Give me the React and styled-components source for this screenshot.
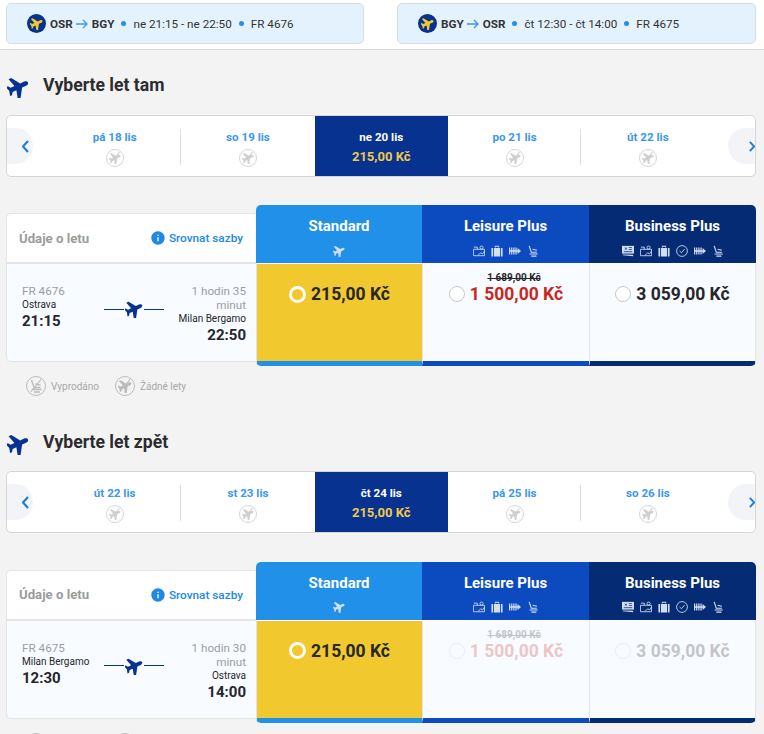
import React from 'react'
import styled, { createGlobalStyle } from 'styled-components'
import { MdInfo } from 'react-icons/md'

const GlobalStyle = createGlobalStyle`
  html, body {
    margin: 0;
    padding: 0;
    background: #f3f3f3;
    font-family: Roboto, "Liberation Sans", sans-serif;
    color: #26262b;
  }
  html { height: 734px; overflow: hidden; }
`

const navy = '#08328f'
const blue = '#2090e9'
const fareColors = { standard: '#2090e9', leisure: '#0c4abf', business: '#052b74' }

const TopBar = styled.header`
  height: 46px;
  background: #fff;
  border-bottom: 1px solid #d9d9d9;
  display: grid;
  grid-template-columns: 358px 359px;
  grid-template-rows: 41px;
  justify-content: space-between;
  padding: 3px 8px 0 6px;
  box-sizing: content-box;
`

const Summary = styled.div`
  box-sizing: border-box;
  background: #e4f2fd;
  border: 1px solid #d3dde6;
  border-radius: 5px;
  display: flex;
  align-items: center;
  padding-left: 20px;
  font-size: 11.7px;
  color: #333;
`

const Badge = styled.span`
  width: 19px;
  height: 19px;
  border-radius: 50%;
  background: ${navy};
  color: #f1c92f;
  display: flex;
  align-items: center;
  justify-content: center;
  margin-right: 4px;
`

const Route = styled.b`
  font-weight: 700;
  color: #333;
`

const RouteArrow = styled.svg`
  width: 12px;
  height: 10px;
  margin: 0 4px 0 3px;
`

const Dot = styled.i`
  width: 5px;
  height: 5px;
  border-radius: 50%;
  background: ${blue};
  margin: 0 7px;
`

const Section = styled.section`
  padding: 0 8px 0 6px;
`

const Title = styled.h2`
  margin: 0;
  height: 65px;
  box-sizing: border-box;
  padding-top: ${p => p.$top}px;
  display: flex;
  align-items: center;
  font-size: 17.6px;
  font-weight: 700;
  color: #2c2c30;
  svg { color: ${navy}; margin: 3px 14px 0 1px; }
`

const Strip = styled.div`
  height: 62px;
  box-sizing: border-box;
  background: #fff;
  border: 1px solid #d6d6d6;
  border-radius: 5px;
  display: grid;
  grid-template-columns: 41px repeat(5, 133.3px) 1fr;
  align-items: stretch;
  overflow: hidden;
`

const ArrowCell = styled.div`
  display: flex;
  align-items: center;
  justify-content: ${p => (p.$right ? 'flex-end' : 'flex-start')};
`

const ArrowButton = styled.span`
  width: ${p => (p.$right ? 27 : 26)}px;
  height: 36px;
  box-sizing: border-box;
  background: #f2f4f7;
  color: #1f7fd6;
  display: flex;
  align-items: center;
  justify-content: ${p => (p.$right ? 'flex-start' : 'flex-end')};
  padding: ${p => (p.$right ? '0 0 0 21px' : '0 4px 0 0')};
  border-radius: ${p => (p.$right ? '18px 0 0 18px' : '0 18px 18px 0')};
`

const Day = styled.div`
  position: relative;
  display: flex;
  flex-direction: column;
  align-items: center;
  padding-top: 14px;
  font-size: 11.6px;
  font-weight: 700;
  color: ${p => (p.$active ? '#fff' : '#3b97ef')};
  background: ${p => (p.$active ? navy : 'transparent')};
  &::after {
    content: '';
    display: ${p => (p.$divider ? 'block' : 'none')};
    position: absolute;
    right: 0;
    top: 13px;
    height: 36px;
    border-right: 1px solid #e0e0e0;
  }
`

const DayPrice = styled.div`
  color: #f1c94a;
  font-size: 13px;
  margin-top: 5px;
`

const NoFlight = styled.span`
  width: 18px;
  height: 18px;
  margin-top: 5px;
  box-sizing: border-box;
  border: 1.5px solid #d6d6d6;
  border-radius: 50%;
  color: #d0d0d0;
  display: flex;
  align-items: center;
  justify-content: center;
  position: relative;
  &::after {
    content: '';
    position: absolute;
    left: 1px;
    right: 1px;
    top: 7px;
    border-top: 1px solid #cfcfcf;
    transform: rotate(-50deg);
  }
`

const Fares = styled.div`
  margin-top: ${p => p.$gap}px;
  display: grid;
  grid-template-columns: 250px 166px 167px 167px;
  grid-template-rows: 58px 103px;
`

const InfoHead = styled.div`
  margin-top: 8px;
  background: #fff;
  border: 1px solid #e4e4e4;
  border-right: 0;
  border-radius: 5px 0 0 0;
  display: flex;
  align-items: center;
  justify-content: space-between;
  padding: 0 13px 0 12px;
  font-size: 13.2px;
  font-weight: 700;
  color: #9b9b9b;
`

const Compare = styled.span`
  display: flex;
  align-items: center;
  gap: 3px;
  font-size: 11.8px;
  color: #2088e5;
  font-weight: 500;
`

const FareHead = styled.div`
  background: ${p => fareColors[p.$fare]};
  border-radius: ${p => p.$radius || 0};
  color: #fff;
  display: flex;
  flex-direction: column;
  align-items: center;
  padding-top: 12px;
  font-size: 15px;
  line-height: 18px;
  font-weight: 700;
`

const Perks = styled.div`
  display: flex;
  align-items: center;
  gap: 6px;
  height: 13px;
  margin-top: 9px;
  color: #d2def4;
  > svg { width: 12px; height: 12px; flex: none; }
`

const FlightCell = styled.div`
  margin-bottom: 4px;
  background: #f8fbff;
  border: 1px solid #e4e4e4;
  border-right: 0;
  border-radius: 0 0 0 5px;
  padding: 20px 10px 0 15px;
  display: grid;
  grid-template-columns: 1fr 60px 1fr;
  box-sizing: border-box;
`

const Side = styled.div`
  display: flex;
  flex-direction: column;
  align-items: ${p => (p.$end ? 'flex-end' : 'flex-start')};
  text-align: ${p => (p.$end ? 'right' : 'left')};
  white-space: ${p => (p.$end ? 'normal' : 'nowrap')};
`

const Muted = styled.div`
  font-size: 11.7px;
  line-height: 14px;
  color: #9c9ca5;
`

const Place = styled.div`
  font-size: 10px;
  line-height: 13px;
  color: #26262b;
`

const Time = styled.div`
  font-size: 15px;
  line-height: 17px;
  font-weight: 700;
  margin-top: 2px;
  color: #26262b;
`

const Leg = styled.div`
  display: flex;
  align-items: center;
  justify-content: center;
  gap: 1px;
  color: ${navy};
  height: 20px;
  margin-top: 15px;
  svg { flex: none; }
  &::before, &::after {
    content: '';
    width: 20px;
    border-top: 1px solid ${navy};
    flex: none;
  }
`

const FareCell = styled.div`
  background: ${p => (p.$selected ? '#f1c92f' : '#f8fbff')};
  border-left: 1px solid #e0e4ea;
  border-right: ${p => (p.$last ? '1px solid #e0e4ea' : 0)};
  border-bottom: 5px solid ${p => fareColors[p.$fare]};
  border-top: 1px solid #fff;
  border-radius: ${p => p.$radius || 0};
  box-sizing: border-box;
  display: flex;
  flex-direction: column;
  align-items: center;
`

const Faded = styled.div`
  opacity: ${p => (p.$dim ? 0.25 : 1)};
  display: flex;
  flex-direction: column;
  align-items: center;
  padding-top: ${p => (p.$hasOld ? 8 : 20)}px;
`

const OldPrice = styled.s`
  font-size: 10px;
  font-weight: 700;
  line-height: 12px;
  color: #26262b;
  margin-left: 16px;
`

const PriceRow = styled.div`
  display: flex;
  align-items: center;
  gap: 5px;
`

const Radio = styled.span`
  width: ${p => (p.$selected ? 11 : 14)}px;
  height: ${p => (p.$selected ? 11 : 14)}px;
  box-sizing: content-box;
  border-radius: 50%;
  background: ${p => (p.$selected ? '#f1c92f' : '#fff')};
  border: ${p => (p.$selected ? '3px solid #fff' : '1px solid #c8c8c8')};
`

const Price = styled.span`
  font-size: 17.5px;
  line-height: 20px;
  font-weight: 700;
  white-space: nowrap;
  color: ${p => (p.$sale ? '#c9281f' : '#26262b')};
`

const Legend = styled.div`
  display: flex;
  align-items: flex-start;
  gap: 16px;
  padding: 10px 0 0 20px;
  height: 40px;
  box-sizing: border-box;
  font-size: 10px;
  color: #a8a8a8;
`

const LegendItem = styled.span`
  display: flex;
  align-items: center;
  gap: 5px;
`

const LegendIcon = styled.span`
  width: 20px;
  height: 20px;
  box-sizing: border-box;
  border: 1.5px solid #bcbcbc;
  border-radius: 50%;
  color: #bcbcbc;
  display: flex;
  align-items: center;
  justify-content: center;
  position: relative;
  &::after {
    content: '';
    position: absolute;
    left: 1px;
    right: 1px;
    top: 8px;
    border-top: 1px solid #bcbcbc;
    transform: rotate(-50deg);
  }
`

const Plane = ({ size = 12 }) => (
  <svg width={size} height={size} viewBox="0 0 24 24" fill="currentColor">
    <g transform="rotate(65 12 12)">
      <path d="M12 0c1.500 0 2.500 1.600 2.500 3.400v4.800L24 14.500v3.300l-9.500-2.700v4.500l2.800 2.100V24L12 22.500 6.700 24v-2.300l2.800-2.100v-4.500L0 17.800v-3.300l9.500-6.300V3.400C9.500 1.600 10.500 0 12 0z" />
    </g>
  </svg>
)

const Chevron = ({ right }) => (
  <svg width="7" height="13" viewBox="0 0 7 13" fill="none" stroke="currentColor" strokeWidth="2.2">
    <path d={right ? 'M1 1l5 5.500-5 5.500' : 'M6 1L1 6.500l5 5.500'} />
  </svg>
)

const Seat = ({ size = 12 }) => (
  <svg width={size} height={size} viewBox="0 0 14 14" fill="none" stroke="currentColor" strokeWidth="1.300">
    <path d="M2.500 1l2.500 7.500h6.500M3 10.500h9.500M5 13h6" />
    <path d="M6.500 5l5 1.200" />
  </svg>
)

const Ticket = () => (
  <svg viewBox="0 0 14 14" fill="currentColor">
    <path d="M0 1h14v9H0z" />
    <path d="M1 11l12 .5V13L1 12z" />
    <path d="M3.500 3l2 2.500M5.500 3l-2 2.500M8 3h3.500M8 5.300h3.500M2 7.800h10" stroke="#052b74" strokeWidth=".9" />
  </svg>
)

const MapBag = () => (
  <svg viewBox="0 0 14 14" fill="none" stroke="currentColor" strokeWidth="1">
    <path d="M.5 5h13v7.500H.5zM1 2.500h4V5M6 12l3-3 2 1.500 2.500-3.500" />
    <circle cx="10" cy="3" r="1.800" />
  </svg>
)

const Bag = () => (
  <svg viewBox="0 0 14 14" fill="currentColor">
    <path d="M4.500 3V1h5v2H8.500V2h-3v1z" />
    <path d="M.5 3.500h2v10h-2zM3.500 3.500h7v10h-7zM11.500 3.500h2v10h-2z" />
  </svg>
)

const Clock = () => (
  <svg viewBox="0 0 14 14" fill="none" stroke="currentColor" strokeWidth="1">
    <circle cx="7" cy="7" r="6.300" />
    <path d="M4.200 7l2.200 2 3.600-4.200" />
  </svg>
)

const Seats = () => (
  <svg viewBox="0 0 14 14" fill="currentColor">
    <path d="M0 3h1.400v8H0zM2.500 3h1.400v8H2.500zM5 3h1.400v8H5zM7.500 3h1.400v8H7.500z" />
    <path d="M0 6h10V3.500L14 7l-4 3.500V8H0z" />
  </svg>
)

const perkIcons = { ticket: Ticket, map: MapBag, bag: Bag, clock: Clock, seats: Seats, seat: Seat }

const fares = [
  { key: 'standard', name: 'Standard', perks: [] },
  { key: 'leisure', name: 'Leisure Plus', perks: ['map', 'bag', 'seats', 'seat'] },
  { key: 'business', name: 'Business Plus', perks: ['ticket', 'map', 'bag', 'clock', 'seats', 'seat'] },
]

const legs = [
  {
    title: 'Vyberte let tam',
    titleTop: 5,
    gap: 28,
    days: ['pá 18 lis', 'so 19 lis', 'ne 20 lis', 'po 21 lis', 'út 22 lis'],
    number: 'FR 4676',
    from: 'Ostrava',
    fromTime: '21:15',
    duration: '1 hodin 35 minut',
    to: 'Milan Bergamo',
    toTime: '22:50',
    dim: false,
  },
  {
    title: 'Vyberte let zpět',
    titleTop: 7,
    gap: 28.6,
    days: ['út 22 lis', 'st 23 lis', 'čt 24 lis', 'pá 25 lis', 'so 26 lis'],
    number: 'FR 4675',
    from: 'Milan Bergamo',
    fromTime: '12:30',
    duration: '1 hodin 30 minut',
    to: 'Ostrava',
    toTime: '14:00',
    dim: true,
  },
]

function DayStrip({ days }) {
  return (
    <Strip>
      <ArrowCell>
        <ArrowButton><Chevron /></ArrowButton>
      </ArrowCell>
      {days.map((day, i) => (
        <Day key={day} $active={i === 2} $divider={i === 0 || i === 3}>
          {day}
          {i === 2 ? (
            <DayPrice>215,00 Kč</DayPrice>
          ) : (
            <NoFlight><Plane size={12} /></NoFlight>
          )}
        </Day>
      ))}
      <ArrowCell $right>
        <ArrowButton $right><Chevron right /></ArrowButton>
      </ArrowCell>
    </Strip>
  )
}

function FareTable({ leg }) {
  return (
    <Fares $gap={leg.gap}>
      <InfoHead>
        Údaje o letu
        <Compare><MdInfo size={16} />Srovnat sazby</Compare>
      </InfoHead>
      {fares.map((fare, i) => (
        <FareHead key={fare.key} $fare={fare.key} $radius={i === 0 ? '5px 0 0 0' : i === 2 ? '0 5px 0 0' : 0}>
          {fare.name}
          <Perks>
            {fare.perks.length === 0 && <Plane size={12} />}
            {fare.perks.map(p => {
              const Icon = perkIcons[p]
              return <Icon key={p} />
            })}
          </Perks>
        </FareHead>
      ))}
      <FlightCell>
        <Side>
          <Muted>{leg.number}</Muted>
          <Place>{leg.from}</Place>
          <Time>{leg.fromTime}</Time>
        </Side>
        <Leg><Plane size={18} /></Leg>
        <Side $end>
          <Muted>{leg.duration}</Muted>
          <Place>{leg.to}</Place>
          <Time>{leg.toTime}</Time>
        </Side>
      </FlightCell>
      <FareCell $fare="standard" $selected $radius="0 0 0 5px">
        <Faded>
          <PriceRow><Radio $selected /><Price>215,00 Kč</Price></PriceRow>
        </Faded>
      </FareCell>
      <FareCell $fare="leisure">
        <Faded $dim={leg.dim} $hasOld>
          <OldPrice>1 689,00 Kč</OldPrice>
          <PriceRow><Radio /><Price $sale>1 500,00 Kč</Price></PriceRow>
        </Faded>
      </FareCell>
      <FareCell $fare="business" $last $radius="0 0 5px 0">
        <Faded $dim={leg.dim}>
          <PriceRow><Radio /><Price>3 059,00 Kč</Price></PriceRow>
        </Faded>
      </FareCell>
    </Fares>
  )
}

const arrowPath = <path d="M0 5h11M7 1l4 4-4 4" />

export default function App() {
  return (
    <>
      <GlobalStyle />
      <TopBar>
        <Summary>
          <Badge><Plane size={13} /></Badge>
          <Route>OSR</Route>
          <RouteArrow viewBox="0 0 12 10" fill="none" stroke="#3b97ef" strokeWidth="1.3">{arrowPath}</RouteArrow>
          <Route>BGY</Route>
          <Dot />
          ne 21:15 - ne 22:50
          <Dot />
          FR 4676
        </Summary>
        <Summary>
          <Badge><Plane size={13} /></Badge>
          <Route>BGY</Route>
          <RouteArrow viewBox="0 0 12 10" fill="none" stroke="#3b97ef" strokeWidth="1.3">{arrowPath}</RouteArrow>
          <Route>OSR</Route>
          <Dot />
          čt 12:30 - čt 14:00
          <Dot />
          FR 4675
        </Summary>
      </TopBar>
      {legs.map(leg => (
        <Section key={leg.number}>
          <Title $top={leg.titleTop}><Plane size={22} />{leg.title}</Title>
          <DayStrip days={leg.days} />
          <FareTable leg={leg} />
          <Legend>
            <LegendItem><LegendIcon><Seat size={14} /></LegendIcon>Vyprodáno</LegendItem>
            <LegendItem><LegendIcon><Plane size={14} /></LegendIcon>Žádné lety</LegendItem>
          </Legend>
        </Section>
      ))}
    </>
  )
}
